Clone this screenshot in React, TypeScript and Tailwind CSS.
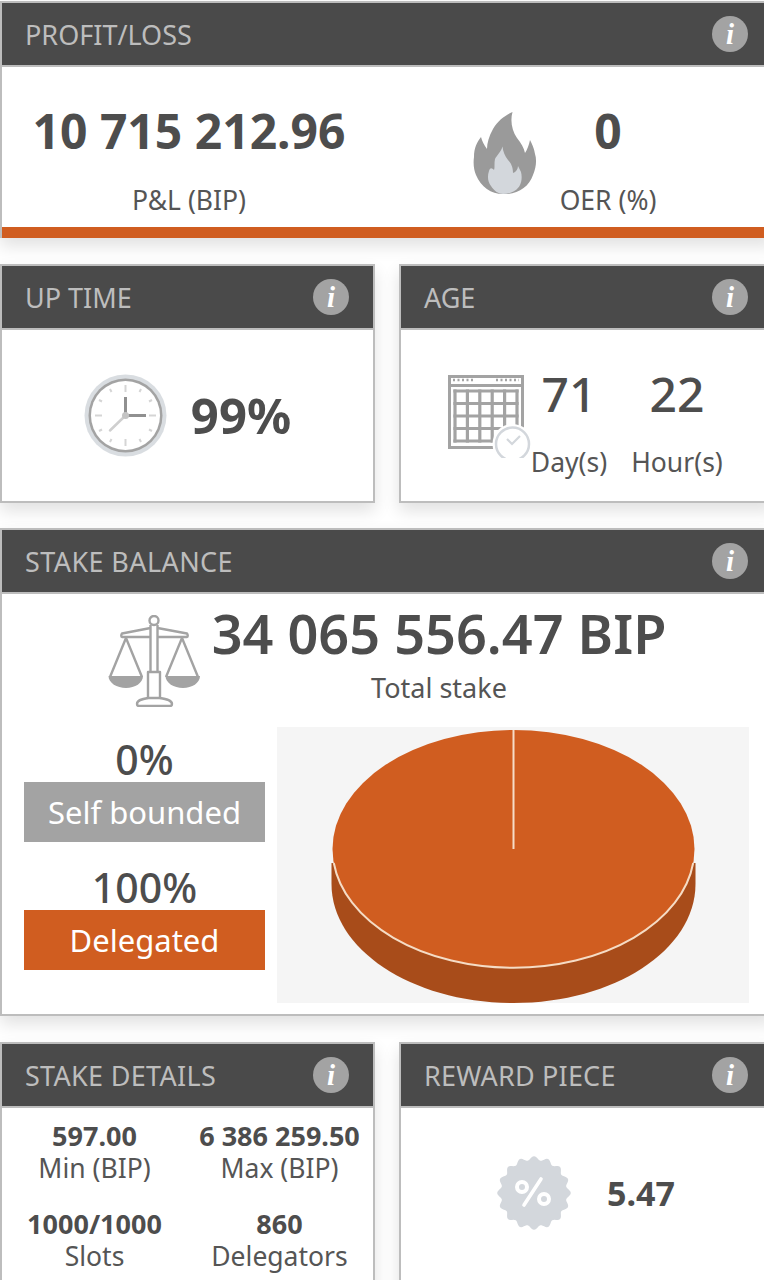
import React from "react";

function Info() {
  return (
    <div className="flex h-[36px] w-[36px] shrink-0 items-center justify-center rounded-full bg-[#a3a3a3] font-['Liberation_Serif',serif] text-[29px] font-bold italic leading-none text-white">
      i
    </div>
  );
}

function Card({ title, className, titleClass, children }: { title: string; className: string; titleClass?: string; children: React.ReactNode }) {
  return (
    <section className={"shrink-0 border-2 border-[#bdbdbd] bg-white shadow-[0_8px_16px_rgba(0,0,0,0.12)] " + className}>
      <header className="flex h-[64px] items-center justify-between border-b-2 border-[#bdbdbd] bg-[#4a4a4a] pl-[24px] pr-[24px]">
        <h2 className={"-ml-[1px] text-[27px] font-normal leading-none text-[#bdbdbd] " + (titleClass ?? "")}>{title}</h2>
        <Info />
      </header>
      {children}
    </section>
  );
}

function Flame() {
  return (
    <svg viewBox="0 0 64 83" className="h-[83px] w-[64px] shrink-0">
      <path
        fill="#9a9a9a"
        d="M39.5 0C33 3 25 8 20 17C16 24 14 31 14 37C11 33 9 29 8 25C4 30 1 36 1 45C0 52 1 58 3 63C8 75 18 82 30 82C44 83 56 75 60 63C63 56 64 48 62 42C61 36 59 32 57 28C56 33 54 38 52 41C51 36 48 31 44 26C39 19 37 9 39.5 0Z"
      />
      <path
        fill="#d3d7dc"
        d="M29.5 34.5C28 40 24 43 22 47C21 51 22 55 21 58C19 56 17 55 16 59C14 65 15 70 18 74C21 79 26 82 30 82C37 82 44 79 47 73C49 69 49 64 48 60C47 58 46 56 45 54C45 57 43 60 40 61C40 55 38 51 35 48C32 44 30 40 29.5 34.5Z"
      />
    </svg>
  );
}

function Clock() {
  return (
    <svg viewBox="0 0 84 84" className="h-[84px] w-[84px] shrink-0">
      <circle cx="41.5" cy="41.5" r="41" fill="#d9dde1" />
      <circle cx="41.5" cy="41.5" r="37" fill="#a3a3a3" />
      <circle cx="41.5" cy="41.5" r="34.5" fill="#ffffff" />
      <path
        stroke="#d5d5d5"
        strokeWidth="2"
        d="M41.5 11V18M41.5 65V72M11 41.5H18M65 41.5H72M26 15L27.5 18M57 15L55.5 18M15 26L18 27.5M68 26L65 27.5M15 57L18 55.5M68 57L65 55.5M26 68L27.5 65M57 68L55.5 65"
      />
      <path stroke="#cfcfcf" strokeWidth="2.5" strokeLinecap="round" d="M41.5 41.5L26 56.5" />
      <path stroke="#909090" strokeWidth="3" d="M41.5 41.5V23" />
      <path stroke="#909090" strokeWidth="3" d="M41.5 41.5H62" />
      <circle cx="41.5" cy="41.5" r="3.5" fill="#c4c4c4" />
    </svg>
  );
}

function Calendar() {
  const v = [7, 19.4, 31.8, 44.2, 56.6, 69];
  const h = [16, 28.5, 41, 53.5, 66];
  return (
    <svg viewBox="0 0 84 83" className="h-[83px] w-[84px] shrink-0">
      <rect x="1.5" y="1.5" width="73" height="71" fill="#ffffff" stroke="#a3a3a3" strokeWidth="3" />
      <path stroke="#a3a3a3" strokeWidth="3" d="M1 10.5H75" />
      <path stroke="#a3a3a3" strokeWidth="2.5" strokeDasharray="2 2.5" d="M5 5H26M48 5H71" />
      {v.map((x) => (
        <path key={"v" + x} stroke="#a3a3a3" strokeWidth="3.2" d={"M" + x + " 14.4V67.6"} />
      ))}
      {h.map((y) => (
        <path key={"h" + y} stroke="#a3a3a3" strokeWidth="3.2" d={"M5.4 " + y + "H70.6"} />
      ))}
      <circle cx="64.5" cy="69" r="20" fill="#ffffff" />
      <circle cx="64.5" cy="69" r="16.5" fill="#ffffff" stroke="#d3d7dc" strokeWidth="2.5" />
      <path d="M62 63L67 68L75 60" transform="translate(-3 1)" fill="none" stroke="#d3d7dc" strokeWidth="2.2" />
    </svg>
  );
}

function Scales() {
  return (
    <svg viewBox="0 0 92 92" className="h-[92px] w-[92px] shrink-0">
      <g fill="none" stroke="#a3a3a3" strokeWidth="2.4" strokeLinejoin="round">
        <circle cx="46" cy="5.5" r="4.5" />
        <path d="M42.5 10V57M49.5 10V57" />
        <path d="M42.5 13L14 18.5C13 20 13 22 14 22H42.5M49.5 13L79 18.5C80 20 80 22 79 22H49.5" />
        <path d="M18 23L2 62M18 23L34 62M74 23L58 62M74 23L90 62" />
        <path d="M40 57H52V83H40Z" />
        <path d="M40 83C34 84 29 85 29 89C29 90.5 30 91 31 91H62C63 91 64 90.5 64 89C64 85 58 84 52 83" />
      </g>
      <path fill="#a3a3a3" d="M0.5 61H35C35 68 27 73 18 73C9 73 0.5 68 0.5 61ZM57.5 61H92C92 68 84 73 75 73C66 73 57.5 68 57.5 61Z" />
    </svg>
  );
}

function Pie() {
  return (
    <svg viewBox="0 0 472 276" className="block h-[276px] w-[472px]">
      <path fill="#a84c1a" d="M54.5 136V157C54.5 223 136 276 236.5 276C337 276 418.5 223 418.5 157V136Z" />
      <ellipse cx="236.5" cy="122" rx="181" ry="119" fill="#d05d20" />
      <path d="M56.8 136A181 119 0 0 0 416.2 136" fill="none" stroke="#f5dcc5" strokeWidth="2" />
      <path d="M236.5 3V122" stroke="#f7dcc6" strokeWidth="2" />
    </svg>
  );
}

const badge = (() => {
  const pts: string[] = [];
  const n = 16 * 12;
  for (let i = 0; i <= n; i++) {
    const a = (i / n) * Math.PI * 2;
    const r = 34.8 + 2 * Math.cos(a * 16);
    pts.push((37 + r * Math.sin(a)).toFixed(2) + " " + (37 - r * Math.cos(a)).toFixed(2));
  }
  return "M" + pts.join("L") + "Z";
})();

function Badge() {
  return (
    <svg viewBox="0 0 74 74" className="h-[74px] w-[74px] shrink-0">
      <path d={badge} fill="#d3d7dc" />
      <circle cx="25" cy="31" r="5" fill="none" stroke="#fff" strokeWidth="4" />
      <circle cx="47" cy="43" r="5" fill="none" stroke="#fff" strokeWidth="4" />
      <path d="M44 23L27 49" stroke="#fff" strokeWidth="3.6" strokeLinecap="round" />
    </svg>
  );
}

function Detail({ value, label }: { value: string; label: string }) {
  return (
    <div className="flex flex-col items-center">
      <div className="text-[27px] font-bold leading-[32px] text-[#4d4d4d]">{value}</div>
      <div className="text-[26.5px] leading-[32px] text-[#555555]">{label}</div>
    </div>
  );
}

function Stat({ value, label, gap, weight }: { value: string; label: string; gap: string; weight: string }) {
  return (
    <div className="flex flex-col items-center">
      <div className={"text-[48px] leading-[60px] text-[#4d4d4d] " + weight}>{value}</div>
      <div className={"text-[26.5px] leading-[36px] text-[#555555] " + gap}>{label}</div>
    </div>
  );
}

export default function App() {
  return (
    <div className="flex h-[1280px] w-[764px] flex-col overflow-hidden bg-white pt-[1px] font-['Noto_Sans',sans-serif]">
      <Card title="PROFIT/LOSS" className="h-[237px] w-[774px] border-b-0">
        <div className="flex h-[160px] items-start">
          <div className="flex w-[374px] pt-[34px] flex-col items-center">
            <Stat value="10 715 212.96" label="P&L (BIP)" gap="mt-[21px]" weight="font-bold" />
          </div>
          <div className="ml-[97px] pt-[45px]">
            <Flame />
          </div>
          <div className="flex w-[142px] flex-col items-center pt-[34px]">
            <Stat value="0" label="OER (%)" gap="mt-[21px]" weight="font-bold" />
          </div>
        </div>
        <div className="h-[11px] bg-[#d05d20]" />
      </Card>

      <div className="mt-[26px] flex gap-[24px]">
        <Card title="UP TIME" className="h-[239px] w-[375px]">
          <div className="flex h-[171px] items-center justify-center gap-[23px]">
            <Clock />
            <div className="text-[49px] font-bold text-[#4d4d4d]">99%</div>
          </div>
        </Card>
        <Card title="AGE" className="h-[239px] w-[375px]">
          <div className="flex h-[171px] items-start pl-[47px]">
            <div className="pt-[45px]">
              <Calendar />
            </div>
            <div className="-ml-[17px] grid w-[216px] grid-cols-2 pt-[34px]">
              <Stat value="71" label="Day(s)" gap="mt-[20px]" weight="font-medium" />
              <Stat value="22" label="Hour(s)" gap="mt-[20px]" weight="font-medium" />
            </div>
          </div>
        </Card>
      </div>

      <Card title="STAKE BALANCE" titleClass="tracking-[0.4px]" className="mt-[25px] h-[488px] w-[774px]">
        <div className="flex items-start pl-[106px]">
          <div className="pt-[21px]">
            <Scales />
          </div>
          <div className="ml-[13px] flex w-[452px] flex-col items-center pt-[12px]">
            <div className="whitespace-nowrap text-[54px] font-semibold leading-[54px] text-[#4d4d4d]">34 065 556.47 BIP</div>
            <div className="mt-[13px] text-[27px] leading-[30px] text-[#555555]">Total stake</div>
          </div>
        </div>
        <div className="mt-[20px] flex pl-[22px]">
          <div className="flex w-[241px] flex-col items-center pt-[10px]">
            <div className="text-[41px] font-medium leading-[45px] text-[#4d4d4d]">0%</div>
            <div className="flex h-[60px] w-full items-center justify-center bg-[#a3a3a3] text-[31px] text-white">Self bounded</div>
            <div className="mt-[23px] text-[41px] font-medium leading-[45px] text-[#4d4d4d]">100%</div>
            <div className="flex h-[60px] w-full items-center justify-center bg-[#d05d20] text-[31px] text-white">Delegated</div>
          </div>
          <div className="ml-[12px] bg-[#f5f5f5]">
            <Pie />
          </div>
        </div>
      </Card>

      <div className="mt-[26px] flex gap-[24px]">
        <Card title="STAKE DETAILS" titleClass="tracking-[0.3px]" className="h-[260px] w-[375px]">
          <div className="grid grid-cols-[185px_185px] gap-y-[24px] pt-[12px]">
            <Detail value="597.00" label="Min (BIP)" />
            <Detail value="6 386 259.50" label="Max (BIP)" />
            <Detail value="1000/1000" label="Slots" />
            <Detail value="860" label="Delegators" />
          </div>
        </Card>
        <Card title="REWARD PIECE" titleClass="tracking-[0.2px]" className="h-[260px] w-[375px]">
          <div className="flex h-[170px] items-center pl-[96px]">
            <Badge />
            <div className="ml-[36px] text-[34px] font-bold text-[#4d4d4d]">5.47</div>
          </div>
        </Card>
      </div>
    </div>
  );
}
